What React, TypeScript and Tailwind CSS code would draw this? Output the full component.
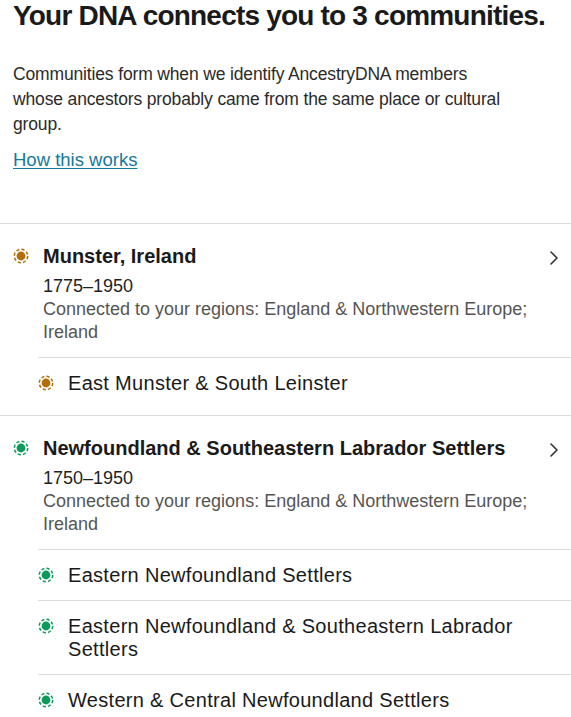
import { ChevronRight } from "lucide-react";

type Tone = "brown" | "green";

const toneColor: Record<Tone, string> = {
  brown: "#b46d05",
  green: "#0c9a5a",
};

function CommunityDot({ tone }: { tone: Tone }) {
  const c = toneColor[tone];
  return (
    <svg width="16" height="16" viewBox="0 0 16 16" className="shrink-0">
      <circle
        cx="8"
        cy="8"
        r="6.7"
        fill="none"
        stroke={c}
        strokeWidth="1.5"
        strokeDasharray="3.2 2.1"
      />
      <circle cx="8" cy="8" r="4.4" fill={c} />
    </svg>
  );
}

interface Community {
  name: string;
  years: string;
  regions: string;
  tone: Tone;
  groups: string[];
}

const communities: Community[] = [
  {
    name: "Munster, Ireland",
    years: "1775\u20131950",
    regions: "Connected to your regions: England & Northwestern Europe; Ireland",
    tone: "brown",
    groups: ["East Munster & South Leinster"],
  },
  {
    name: "Newfoundland & Southeastern Labrador Settlers",
    years: "1750\u20131950",
    regions: "Connected to your regions: England & Northwestern Europe; Ireland",
    tone: "green",
    groups: [
      "Eastern Newfoundland Settlers",
      "Eastern Newfoundland & Southeastern Labrador Settlers",
      "Western & Central Newfoundland Settlers",
    ],
  },
];

function CommunityBlock({ item }: { item: Community }) {
  return (
    <section className="border-t border-[#dcdcdc] pb-[7px]">
      <div className="flex items-start pl-[13px] pr-[5px] pt-[20px] pb-[13px]">
        <div className="mt-[4px] mr-[14px]">
          <CommunityDot tone={item.tone} />
        </div>
        <div className="flex-1">
          <h2 className="text-[20px] leading-[24px] font-bold text-[#1a1a1a]">
            {item.name}
          </h2>
          <p className="mt-[6px] text-[18px] leading-[24px] text-[#1f1f1f]">
            {item.years}
          </p>
          <p className="text-[18px] leading-[23px] text-[#555555]">
            {item.regions}
          </p>
        </div>
        <ChevronRight
          className="mt-[2px] h-[24px] w-[24px] shrink-0 text-[#333333]"
          strokeWidth={1.6}
        />
      </div>
      <ul className="ml-[38px]">
        {item.groups.map((g) => (
          <li
            key={g}
            className="flex items-start border-t border-[#dcdcdc] pt-[14px] pb-[13px] pr-[40px]"
          >
            <div className="mt-[3px] mr-[14px]">
              <CommunityDot tone={item.tone} />
            </div>
            <span className="text-[20px] leading-[23px] tracking-[0.3px] text-[#1a1a1a]">
              {g}
            </span>
          </li>
        ))}
      </ul>
    </section>
  );
}

export default function App() {
  return (
    <div className="w-[571px] min-h-[717px] bg-white font-['Liberation_Sans',Arial,sans-serif]">
      <header className="px-[13px] pb-[50px]">
        <h1 className="text-[28px] leading-[32px] font-bold text-[#1a1a1a] tracking-[-0.8px]">
          Your DNA connects you to 3 communities.
        </h1>
        <p className="mt-[30px] max-w-[505px] text-[17.5px] leading-[25px] tracking-[-0.15px] text-[#2b2b2b]">
          Communities form when we identify AncestryDNA members whose ancestors
          probably came from the same place or cultural group.
        </p>
        <a
          href="#"
          className="mt-[10px] inline-block text-[18.5px] leading-[25px] text-[#16789b] underline underline-offset-2"
        >
          How this works
        </a>
      </header>
      {communities.map((c) => (
        <CommunityBlock key={c.name} item={c} />
      ))}
    </div>
  );
}
